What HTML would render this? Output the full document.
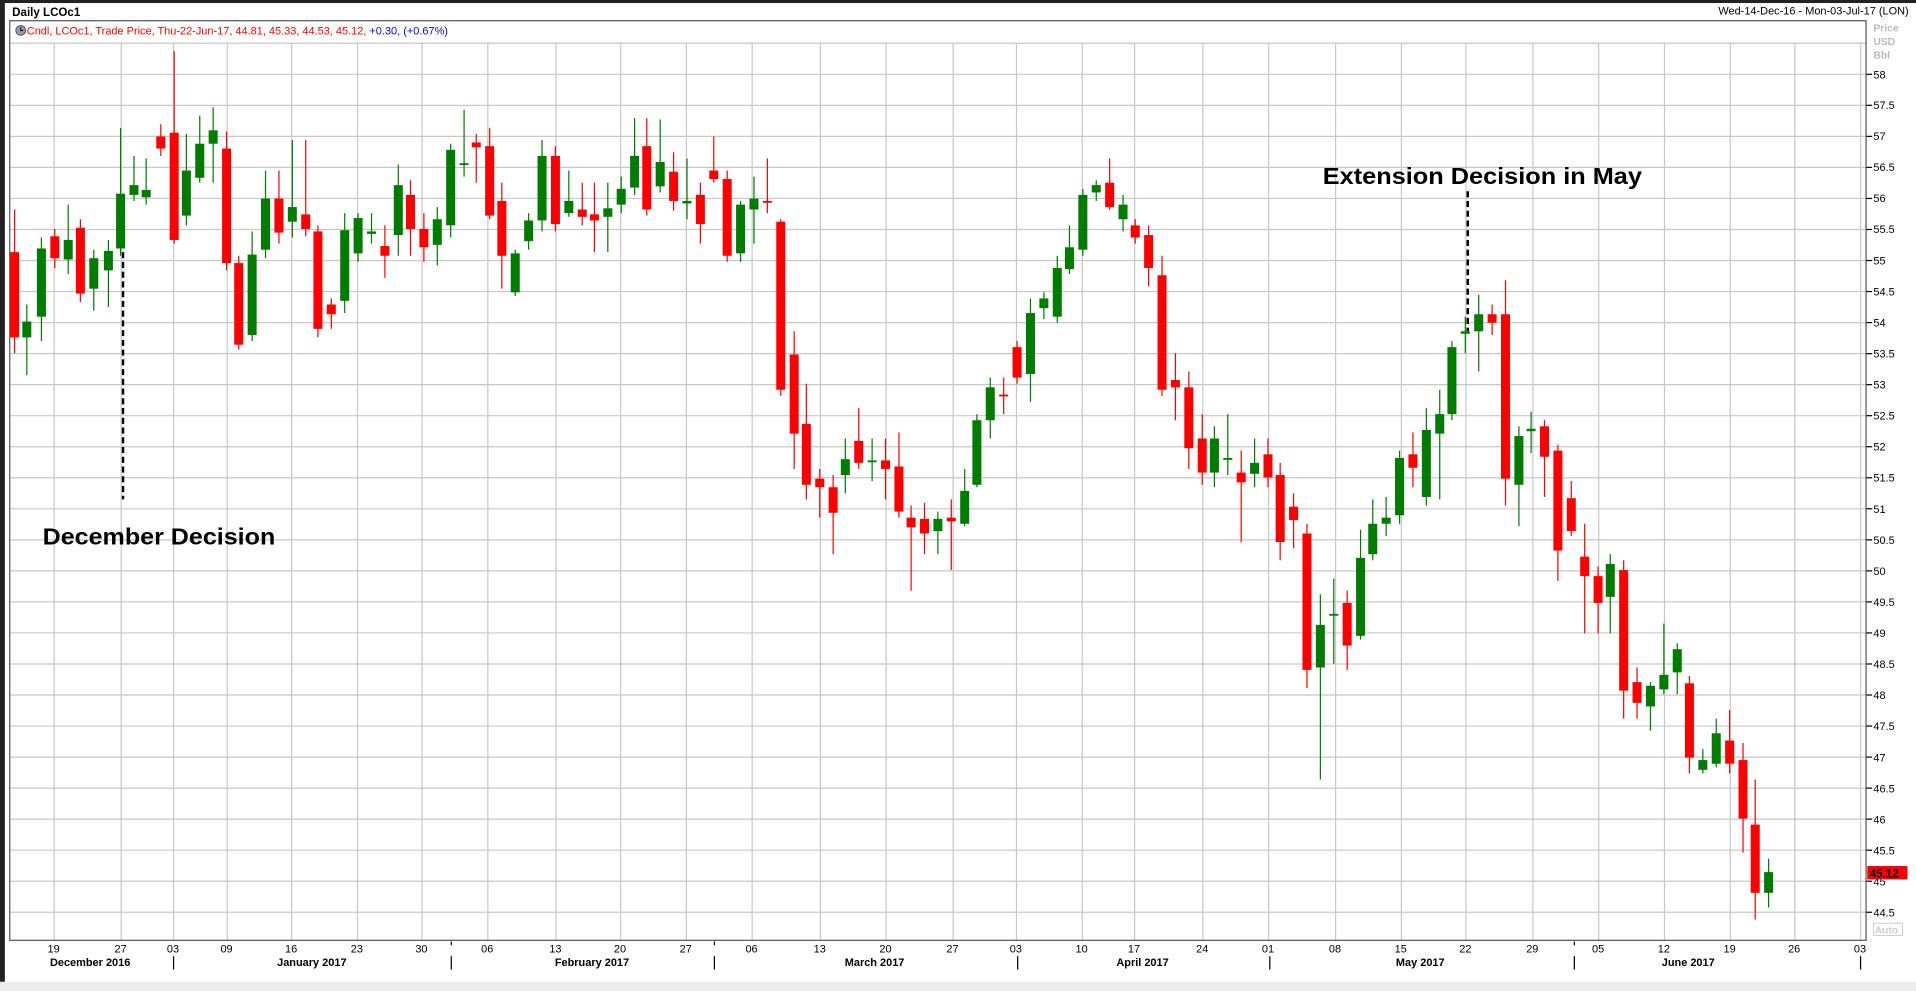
<!DOCTYPE html>
<html><head><meta charset="utf-8"><style>
html,body{margin:0;padding:0;background:#fff;overflow:hidden}
svg{display:block}
text{font-family:"Liberation Sans",sans-serif}
</style></head><body>
<svg id="s" width="1916" height="991" viewBox="0 0 1573 813.6" preserveAspectRatio="none" xmlns="http://www.w3.org/2000/svg">
<rect x="0" y="0" width="1573" height="813.6" fill="#fff"/>
<rect x="0" y="0" width="1573" height="2.5" fill="#222"/>
<rect x="0" y="0" width="4" height="813.6" fill="#222"/>
<rect x="0" y="806" width="1573" height="8" fill="#ececec"/>
<g id="grid"></g>
<rect x="8" y="17" width="1524" height="755" fill="none" stroke="#555" stroke-width="1"/>
<text x="10" y="13" font-size="9.5" font-weight="bold" fill="#000">Daily LCOc1</text>
<text x="1567" y="12" font-size="9" fill="#000" text-anchor="end">Wed-14-Dec-16 - Mon-03-Jul-17 (LON)</text>
<circle cx="17" cy="25" r="4" fill="#99a" stroke="#556" stroke-width="0.8"/>
<path d="M17 22.5 V25 H19" stroke="#000" stroke-width="0.8" fill="none"/>
<text x="22" y="28.5" font-size="9" fill="#f00">Cndl, LCOc1, Trade Price, Thu-22-Jun-17, 44.81, 45.33, 44.53, 45.12, <tspan fill="#00f">+0.30, (+0.67%)</tspan></text>
<text x="1538" y="26" font-size="8.5" font-weight="bold" fill="#bbb">Price</text>
<text x="1538" y="37" font-size="8.5" font-weight="bold" fill="#bbb">USD</text>
<text x="1538" y="48" font-size="8.5" font-weight="bold" fill="#bbb">Bbl</text>
<g font-size="9" fill="#000">
<text x="1538" y="64.5">58</text><text x="1538" y="89.5">57.5</text><text x="1538" y="115">57</text><text x="1538" y="140.5">56.5</text><text x="1538" y="166">56</text><text x="1538" y="191.5">55.5</text><text x="1538" y="217">55</text><text x="1538" y="242.5">54.5</text><text x="1538" y="268">54</text><text x="1538" y="293.5">53.5</text><text x="1538" y="319">53</text><text x="1538" y="344.5">52.5</text><text x="1538" y="370">52</text><text x="1538" y="395.5">51.5</text><text x="1538" y="421">51</text><text x="1538" y="446.5">50.5</text><text x="1538" y="472">50</text><text x="1538" y="497.5">49.5</text><text x="1538" y="523">49</text><text x="1538" y="548.5">48.5</text><text x="1538" y="574">48</text><text x="1538" y="599.5">47.5</text><text x="1538" y="625">47</text><text x="1538" y="650.5">46.5</text><text x="1538" y="676">46</text><text x="1538" y="701.5">45.5</text><text x="1538" y="727">45</text><text x="1538" y="752.5">44.5</text>
</g>
<rect x="1533" y="711" width="33" height="11" fill="#f00"/>
<text x="1535" y="720.5" font-size="9.5" font-weight="bold" fill="#000">45.12</text>
<rect x="1538" y="758" width="24" height="10" fill="none" stroke="#ccc" stroke-width="0.8"/>
<text x="1539" y="766.5" font-size="8.5" font-weight="bold" fill="#ccc">Auto</text>
<g font-size="9" fill="#000" text-anchor="middle">
<text x="44" y="782">19</text><text x="99" y="782">27</text><text x="142" y="782">03</text><text x="186" y="782">09</text><text x="239" y="782">16</text><text x="293" y="782">23</text><text x="346" y="782">30</text><text x="400" y="782">06</text><text x="456" y="782">13</text><text x="509" y="782">20</text><text x="563" y="782">27</text><text x="617" y="782">06</text><text x="673" y="782">13</text><text x="727" y="782">20</text><text x="782" y="782">27</text><text x="834" y="782">03</text><text x="888" y="782">10</text><text x="931" y="782">17</text><text x="987" y="782">24</text><text x="1041" y="782">01</text><text x="1096" y="782">08</text><text x="1150" y="782">15</text><text x="1203" y="782">22</text><text x="1258" y="782">29</text><text x="1312" y="782">05</text><text x="1366" y="782">12</text><text x="1420" y="782">19</text><text x="1473" y="782">26</text><text x="1527" y="782">03</text>
</g>
<g font-size="9" font-weight="bold" fill="#000" text-anchor="middle">
<text x="74" y="793">December 2016</text><text x="256" y="793">January 2017</text><text x="486" y="793">February 2017</text><text x="718" y="793">March 2017</text><text x="938" y="793">April 2017</text><text x="1166" y="793">May 2017</text><text x="1386" y="793">June 2017</text>
</g>
<g stroke="#000" stroke-width="1">
<line x1="142.5" y1="785" x2="142.5" y2="796"/><line x1="370.5" y1="785" x2="370.5" y2="796"/><line x1="586.5" y1="785" x2="586.5" y2="796"/><line x1="835.5" y1="785" x2="835.5" y2="796"/><line x1="1042.5" y1="785" x2="1042.5" y2="796"/><line x1="1292.5" y1="785" x2="1292.5" y2="796"/><line x1="1527.5" y1="785" x2="1527.5" y2="796"/>
<line x1="370.5" y1="773" x2="370.5" y2="776"/><line x1="586.5" y1="773" x2="586.5" y2="776"/><line x1="1292.5" y1="773" x2="1292.5" y2="776"/>
</g>
<g id="c"></g>
<line x1="101" y1="207" x2="101" y2="410" stroke="#000" stroke-width="2" stroke-dasharray="5,3"/>
<line x1="1205" y1="157" x2="1205" y2="272" stroke="#000" stroke-width="2" stroke-dasharray="5,3"/>
<text x="35" y="447" font-size="19" font-weight="bold" fill="#000" textLength="191" lengthAdjust="spacingAndGlyphs">December Decision</text>
<text x="1086" y="151" font-size="19" font-weight="bold" fill="#000" textLength="262" lengthAdjust="spacingAndGlyphs">Extension Decision in May</text>
</svg>
<script>
var NS="http://www.w3.org/2000/svg";
function el(p,t,a){var e=document.createElementNS(NS,t);for(var k in a)e.setAttribute(k,a[k]);p.appendChild(e);return e;}
var g=document.getElementById('grid');
var xs=[44,99,142,186,239,293,346,400,456,509,563,617,673,727,782,834,888,931,987,1041,1096,1150,1203,1258,1312,1366,1420,1473,1527];
xs.forEach(function(x){el(g,'line',{x1:x+.5,y1:35,x2:x+.5,y2:772,stroke:'#c8c8c8','stroke-width':1});});
for(var i=-1;i<=27;i++){var y=61+i*25.48;el(g,'line',{x1:8,y1:y,x2:1532,y2:y,stroke:'#c8c8c8','stroke-width':1});if(i>=0)el(g,'line',{x1:1532,y1:y,x2:1537,y2:y,stroke:'#000','stroke-width':1});}
var d=[
[12,'r',207,277,172,290],[22,'g',277,264,250,308],[34,'g',260,204,195,280],[45,'r',194,212,188,220],[56,'g',213,197,168,225],[66,'r',187,241,180,248],[77,'g',237,212,205,255],[89,'g',222,206,197,252],[99,'g',204,159,105,210],[110,'g',160,152,128,165],[120,'g',162,156,130,168],[132,'r',112,122,102,128],[143,'r',109,197,42,200],[153,'g',177,140,110,185],[164,'g',146,118,95,150],[175,'g',118,107,88,150],[186,'r',122,216,108,222],[196,'r',216,283,210,287],[207,'g',275,209,190,280],[218,'g',205,163,140,212],[229,'r',163,191,140,200],[240,'g',182,170,115,195],[251,'r',176,188,115,194],[261,'r',190,270,185,277],[272,'r',250,258,245,270],[283,'g',247,189,175,257],[294,'g',208,179,175,215],[305,'g',192,190,175,200],[316,'r',202,210,185,228],[327,'g',193,152,135,210],[337,'r',160,188,148,210],[348,'r',188,203,175,215],[359,'g',201,180,170,218],[370,'g',185,123,118,195],[381,'g',135,134,90,145],[391,'r',117,121,110,150],[402,'r',120,177,105,180],[412,'r',165,210,150,237],[423,'g',240,208,205,243],[434,'g',198,181,175,205],[445,'g',181,128,115,190],[456,'r',128,184,120,190],[467,'g',175,165,140,178],[478,'r',172,178,150,185],[488,'r',176,181,150,207],[499,'g',178,171,150,207],[510,'g',168,155,145,175],[521,'g',154,128,97,160],[531,'r',120,172,97,177],[542,'g',153,133,98,158],[553,'r',141,165,125,173],[564,'g',167,165,130,180],[575,'r',160,184,150,200],[586,'r',140,147,112,150],[597,'r',147,210,140,215],[608,'g',208,168,165,215],[619,'g',172,163,145,200],[630,'r',165,166,130,175],[641,'r',182,320,180,325],[652,'r',291,356,272,385],[662,'r',348,398,315,410],[673,'r',393,400,385,425],[684,'r',400,421,390,455],[694,'g',390,377,360,405],[705,'r',362,380,335,385],[716,'g',378,379,360,395],[727,'r',378,385,360,410],[738,'r',383,420,355,425],[748,'r',425,433,415,485],[759,'r',426,438,413,455],[770,'g',436,426,420,455],[781,'r',425,428,410,468],[792,'g',430,403,385,432],[802,'g',398,345,340,400],[813,'g',345,318,310,360],[824,'r',324,325,310,340],[835,'r',285,310,280,315],[846,'g',307,257,245,330],[857,'g',253,245,240,262],[868,'g',260,220,210,265],[878,'g',221,203,185,225],[889,'g',205,160,155,210],[900,'g',158,152,148,165],[911,'r',150,170,130,172],[922,'g',180,168,160,190],[932,'r',185,195,180,200],[943,'r',193,220,185,235],[954,'r',226,320,210,325],[965,'r',312,318,290,345],[976,'r',318,368,305,385],[987,'r',360,388,340,398],[997,'g',388,360,350,400],[1008,'g',377,376,340,390],[1019,'r',388,396,370,445],[1030,'g',389,380,360,400],[1041,'r',373,392,360,400],[1051,'r',390,445,380,460],[1062,'r',416,427,405,450],[1073,'r',438,550,430,565],[1084,'g',548,513,488,640],[1095,'g',505,504,475,545],[1106,'r',495,530,485,550],[1117,'g',522,458,435,525],[1127,'g',455,430,410,460],[1138,'g',430,425,408,440],[1149,'g',423,376,370,430],[1160,'r',373,384,355,400],[1171,'g',408,353,335,415],[1182,'g',356,340,320,410],[1192,'g',340,285,280,345],[1203,'g',274,272,260,290],[1214,'g',272,258,242,305],[1225,'r',258,265,250,275],[1236,'r',258,393,230,415],[1247,'g',398,358,350,432],[1257,'g',354,352,338,372],[1268,'r',350,375,345,408],[1279,'r',370,452,365,477],[1290,'r',409,436,395,440],[1301,'r',457,473,430,520],[1312,'r',473,495,465,520],[1322,'g',490,463,455,520],[1333,'r',468,567,460,590],[1344,'r',560,577,548,590],[1355,'g',580,563,560,600],[1366,'g',566,554,512,570],[1377,'g',552,533,528,570],[1387,'r',561,622,555,635],[1398,'g',632,624,615,635],[1409,'g',627,602,590,630],[1420,'r',608,627,583,635],[1431,'r',624,672,610,700],[1441,'r',677,733,640,755],[1452,'g',733,716,705,745]];
var c=document.getElementById('c');
d.forEach(function(a){var col=a[1]=='r'?'#ff0000':'#007d00';var x=a[0];
el(c,'line',{x1:x,y1:a[4],x2:x,y2:a[5],stroke:col,'stroke-width':1});
var t=Math.min(a[2],a[3]),h=Math.max(Math.abs(a[3]-a[2]),1.5);
el(c,'rect',{x:x-3.7,y:t,width:7.4,height:h,fill:col});});
</script>
</body></html>
